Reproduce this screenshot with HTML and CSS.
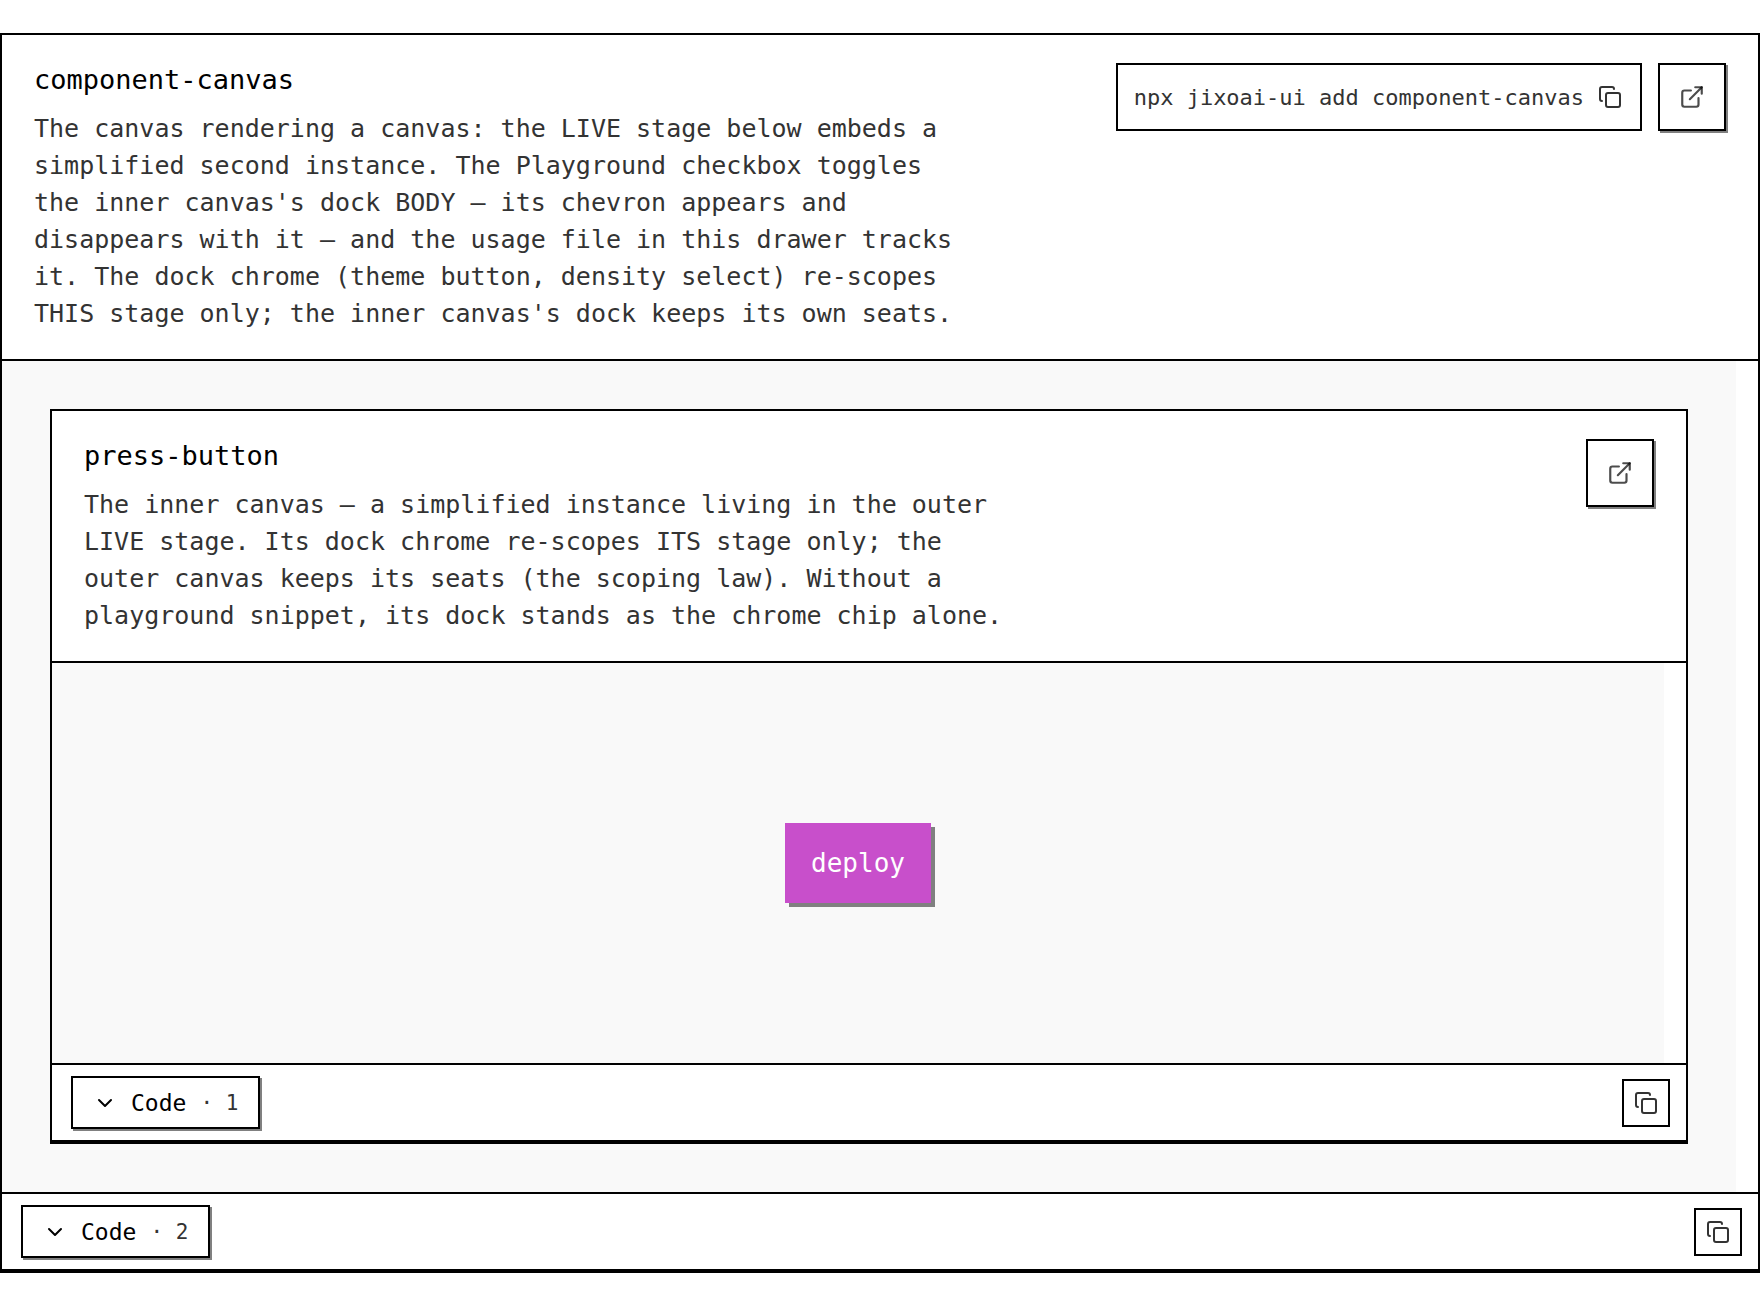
FILE: index.html
```html
<!DOCTYPE html>
<html lang="en">

<head>
    <meta charset="utf-8">
    <meta name="viewport" content="width=device-width, initial-scale=1">
    <title>component-canvas</title>
    <link rel="stylesheet" href="styles.css">
</head>

<body>
    <!-- shared icons -->
    <svg class="sprite" aria-hidden="true">
        <symbol id="icon-copy" viewBox="0 0 24 24">
            <rect x="8" y="8" width="14" height="14" rx="2"></rect>
            <path d="M4 16c-1.1 0-2-.9-2-2V4c0-1.1.9-2 2-2h10c1.1 0 2 .9 2 2"></path>
        </symbol>
        <symbol id="icon-external" viewBox="0 0 24 24">
            <path d="M15 3h6v6"></path>
            <path d="M10 14 21 3"></path>
            <path d="M18 13v6a2 2 0 0 1-2 2H5a2 2 0 0 1-2-2V8a2 2 0 0 1 2-2h6"></path>
        </symbol>
        <symbol id="icon-chevron" viewBox="0 0 24 24">
            <path d="m6 9 6 6 6-6"></path>
        </symbol>
    </svg>

    <main class="canvas">
        <header class="canvas-header">
            <div class="canvas-intro">
                <h1 class="canvas-title">component-canvas</h1>
                <p class="canvas-description">The canvas rendering a canvas: the LIVE stage below embeds a simplified second instance. The Playground checkbox toggles the inner canvas's dock BODY — its chevron appears and disappears with it — and the usage file in this drawer tracks it. The dock chrome (theme button, density select) re-scopes THIS stage only; the inner canvas's dock keeps its own seats.</p>
            </div>
            <div class="canvas-actions">
                <button type="button" class="install-button">
                    <code>npx jixoai-ui add component-canvas</code>
                    <svg class="icon icon-copy"><use href="#icon-copy"></use></svg>
                </button>
                <a class="open-link" href="#" aria-label="Open component-canvas">
                    <svg class="icon icon-external"><use href="#icon-external"></use></svg>
                </a>
            </div>
        </header>

        <div class="stage">
            <section class="canvas">
                <header class="canvas-header">
                    <div class="canvas-intro">
                        <h2 class="canvas-title">press-button</h2>
                        <p class="canvas-description">The inner canvas — a simplified instance living in the outer LIVE stage. Its dock chrome re-scopes ITS stage only; the outer canvas keeps its seats (the scoping law). Without a playground snippet, its dock stands as the chrome chip alone.</p>
                    </div>
                    <div class="canvas-actions">
                        <a class="open-link" href="#" aria-label="Open press-button">
                            <svg class="icon icon-external"><use href="#icon-external"></use></svg>
                        </a>
                    </div>
                </header>

                <div class="stage stage-centered">
                    <button type="button" class="deploy-button">deploy</button>
                </div>

                <footer class="drawer">
                    <button type="button" class="code-toggle" aria-expanded="false">
                        <svg class="icon icon-chevron"><use href="#icon-chevron"></use></svg>
                        <span class="code-label">Code</span>
                        <span class="code-count">· 1</span>
                    </button>
                    <button type="button" class="copy-button" aria-label="Copy code">
                        <svg class="icon icon-copy"><use href="#icon-copy"></use></svg>
                    </button>
                </footer>
            </section>
        </div>

        <footer class="drawer">
            <button type="button" class="code-toggle" aria-expanded="false">
                <svg class="icon icon-chevron"><use href="#icon-chevron"></use></svg>
                <span class="code-label">Code</span>
                <span class="code-count">· 2</span>
            </button>
            <button type="button" class="copy-button" aria-label="Copy code">
                <svg class="icon icon-copy"><use href="#icon-copy"></use></svg>
            </button>
        </footer>
    </main>
</body>

</html>
```

FILE: styles.css
```css
* {
    box-sizing: border-box;
}

body {
    margin: 0;
    padding: 33px 0 32px;
    background: #ffffff;
    color: #000000;
    font-family: "DejaVu Sans Mono", monospace;
}

button,
code {
    font-family: inherit;
}

button {
    margin: 0;
    color: inherit;
    cursor: pointer;
}

/* icons */
.sprite {
    display: none;
}

.icon {
    display: block;
    flex: none;
    width: 24px;
    height: 24px;
    fill: none;
    stroke: #333333;
    stroke-width: 2;
    stroke-linecap: round;
    stroke-linejoin: round;
}

.icon-external {
    width: 26px;
    height: 26px;
    stroke: rgba(0, 0, 0, 0.7);
}

.icon-chevron {
    stroke: #000000;
}

/* canvas */
.canvas {
    background: #ffffff;
    border: 2px solid #000000;
    border-bottom-width: 4px;
}

.canvas-header {
    display: flex;
    justify-content: space-between;
    align-items: flex-start;
    gap: 32px;
    padding: 28px 32px 27px;
    border-bottom: 2px solid #000000;
}

.canvas-title {
    margin: 0 0 13px;
    font-size: 27px;
    font-weight: normal;
    line-height: 34px;
}

.canvas-description {
    max-width: 62ch;
    margin: 0;
    color: #333333;
    font-size: 25px;
    line-height: 37px;
}

.canvas-actions {
    display: flex;
    flex: none;
    gap: 16px;
}

.install-button {
    display: flex;
    align-items: center;
    gap: 14px;
    height: 68px;
    padding: 0 18px 0 16px;
    background: #ffffff;
    border: 2px solid #000000;
    color: #333333;
    font-size: 22px;
}

.open-link {
    display: flex;
    align-items: center;
    justify-content: center;
    width: 68px;
    height: 68px;
    background: #ffffff;
    border: 2px solid #000000;
    box-shadow: 2px 2px 0 #808080;
}

/* the right border stands in for the scrollbar gutter */
.stage {
    padding: 48px;
    background: #f9f9f9;
    border-right: 22px solid #ffffff;
}

.stage-centered {
    display: flex;
    align-items: center;
    justify-content: center;
    min-height: 400px;
}

.deploy-button {
    height: 80px;
    padding: 0 26px;
    background: #c84fcb;
    border: none;
    box-shadow: 4px 4px 0 #808080;
    color: #ffffff;
    font-size: 26px;
}

/* code drawer */
.drawer {
    display: flex;
    align-items: center;
    justify-content: space-between;
    height: 77px;
    padding: 0 16px 0 19px;
    border-top: 2px solid #000000;
}

.code-toggle {
    display: flex;
    align-items: center;
    gap: 14px;
    height: 53px;
    padding: 0 20px;
    background: #ffffff;
    border: 2px solid #000000;
    box-shadow: 2px 2px 0 #808080;
}

.code-label {
    font-size: 23px;
}

.code-count {
    color: #333333;
    font-size: 21px;
}

.copy-button {
    display: flex;
    align-items: center;
    justify-content: center;
    width: 48px;
    height: 48px;
    padding: 0;
    background: #ffffff;
    border: 2px solid #000000;
}
```
